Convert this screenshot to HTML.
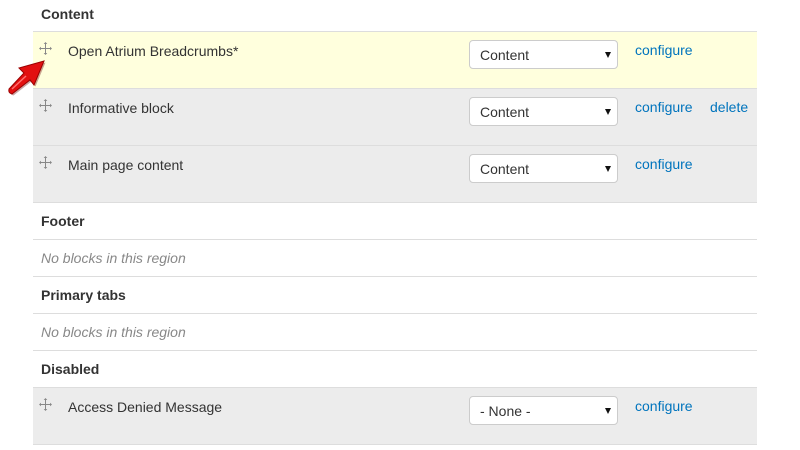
<!DOCTYPE html>
<html><head><style>
body{margin:0;width:800px;height:450px;background:#fff;font-family:"Liberation Sans",sans-serif;font-size:14px;color:#333;position:relative;overflow:hidden}
.r{position:absolute;left:33px;width:724px;border-bottom:1px solid #ddd;box-sizing:border-box}
.h{font-weight:bold;padding-left:8px}
.e{font-style:italic;color:#888;padding-left:8px}
.drag{position:absolute;left:6px;top:10px;width:13px;height:13px}
.t{position:absolute;left:35px;top:11px}
.sel{position:absolute;left:436px;top:8px;width:149px;height:29px;border:1px solid #ccc;border-radius:4px;background:#fff;box-sizing:border-box}
.sel span{position:absolute;left:10px;top:6px}
.sel i{position:absolute;right:6px;top:11px;width:0;height:0;border-left:3px solid transparent;border-right:3px solid transparent;border-top:6px solid #111}
.a{position:absolute;top:10px;color:#0074bd}
</style></head><body>
<svg width="0" height="0" style="position:absolute"><defs><g id="d" stroke="#888" stroke-width="1" fill="#888"><line x1="6.5" y1="1" x2="6.5" y2="12"/><line x1="1" y1="6.5" x2="12" y2="6.5"/><path d="M6.5 0l1.8 2h-3.6zM6.5 13l1.8-2h-3.6zM0 6.5l2-1.8v3.6zM13 6.5l-2-1.8v3.6z" stroke="none"/></g></defs></svg>

<div class="r h" style="top:0;height:32px;line-height:28px">Content</div>
<div class="r" style="top:31px;height:58px;background:#ffffdd;border-top:1px solid #ddd">
<svg class="drag" viewBox="0 0 13 13"><use href="#d"/></svg><div class="t" style="top:11px">Open Atrium Breadcrumbs*</div>
<div class="sel"><span>Content</span><i></i></div><div class="a" style="left:602px;top:10px">configure</div></div>
<div class="r" style="top:89px;height:57px;background:#ececec">
<svg class="drag" viewBox="0 0 13 13"><use href="#d"/></svg><div class="t">Informative block</div>
<div class="sel"><span>Content</span><i></i></div><div class="a" style="left:602px">configure</div><div class="a" style="left:677px">delete</div></div>
<div class="r" style="top:146px;height:57px;background:#ececec">
<svg class="drag" viewBox="0 0 13 13"><use href="#d"/></svg><div class="t">Main page content</div>
<div class="sel"><span>Content</span><i></i></div><div class="a" style="left:602px">configure</div></div>
<div class="r h" style="top:203px;height:37px;line-height:36px">Footer</div>
<div class="r e" style="top:240px;height:37px;line-height:36px">No blocks in this region</div>
<div class="r h" style="top:277px;height:37px;line-height:36px">Primary tabs</div>
<div class="r e" style="top:314px;height:37px;line-height:36px">No blocks in this region</div>
<div class="r h" style="top:351px;height:37px;line-height:36px">Disabled</div>
<div class="r" style="top:388px;height:57px;background:#ececec">
<svg class="drag" viewBox="0 0 13 13"><use href="#d"/></svg><div class="t">Access Denied Message</div>
<div class="sel"><span>- None -</span><i></i></div><div class="a" style="left:602px">configure</div></div>
<svg style="position:absolute;left:4px;top:56px" width="46" height="44" viewBox="0 0 46 44">
<path d="M5 33 Q4 37 8 38 L26 24 L30 29 L40 5 L15 12 L20 17 Z" fill="#600" opacity=".35" transform="translate(1.5,1.5)"/>
<path d="M5 33 Q4 37 8 38 L26 24 L30 29 L40 5 L15 12 L20 17 Z" fill="#e21010" stroke="#9a0000" stroke-width="1"/>
<path d="M8 33 L22 20" stroke="#ff7070" stroke-width="1.5"/>
</svg>
</body></html>
